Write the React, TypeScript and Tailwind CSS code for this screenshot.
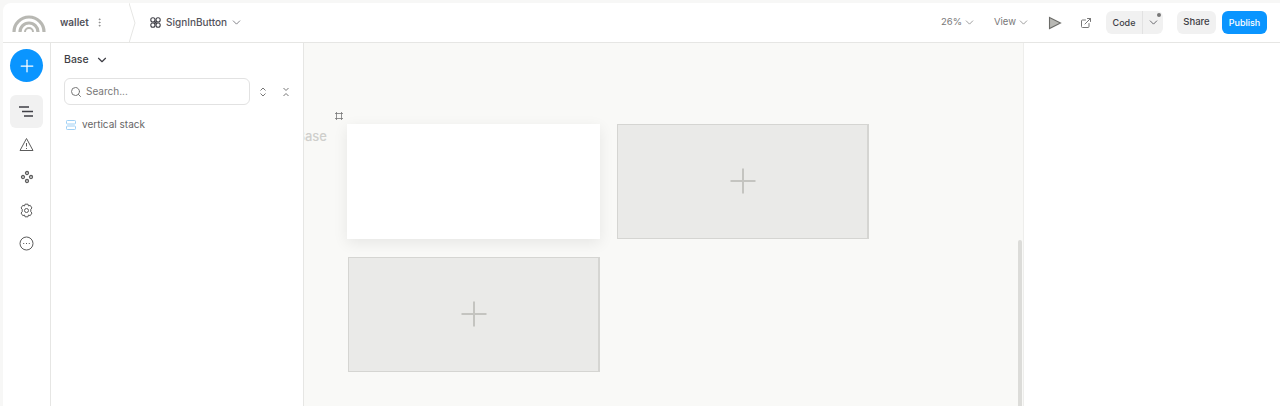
import { ChevronDown, EllipsisVertical, ExternalLink, Plus, Search } from 'lucide-react';

function ComponentIcon() {
  return (
    <svg width="11" height="11" viewBox="0 0 11 11" fill="none" stroke="#3f3f46" strokeWidth="1.1">
      <rect x="0.8" y="0.8" width="4.2" height="4.2" rx="2" />
      <rect x="6" y="0.8" width="4.2" height="4.2" rx="2" />
      <rect x="0.8" y="6" width="4.2" height="4.2" rx="2" />
      <rect x="6" y="6" width="4.2" height="4.2" rx="2" />
      <path d="M4 4L7 7M7 4L4 7" />
    </svg>
  );
}

function Logo() {
  return (
    <svg width="34" height="18" viewBox="0 0 34 18" fill="none" stroke="#b8b8b3" strokeWidth="3.2">
      <path d="M2 18 A15 15 0 0 1 32 18" />
      <path d="M8 18 A9 9 0 0 1 26 18" />
      <path d="M13 18 A4 4 0 0 1 21 18" strokeWidth="2" />
    </svg>
  );
}

function Placeholder({ className }: { className?: string }) {
  return (
    <div className={`flex items-center justify-center bg-[#eaeae8] border border-[#d5d5d2] border-r-[2px] ${className ?? ''}`}>
      <svg width="26" height="26" viewBox="0 0 26 26" stroke="#c4c4c0" strokeWidth="2" className="-mt-[1px]">
        <path d="M13 0.5V25.5M0.5 13H25.5" />
      </svg>
    </div>
  );
}

function RailIcon({ children }: { children: React.ReactNode }) {
  return <div className="w-8 h-[33px] flex items-center justify-center text-[#5c5c5c]">{children}</div>;
}

export default function App() {
  return (
    <div className="w-[1280px] h-[406px] overflow-hidden bg-[#f7f7f6] pt-[3px] pl-[3px] font-['Inter',sans-serif] text-[#3f3f46]">
      <div className="h-[403px] bg-white rounded-tl-lg flex flex-col">
        <header className="h-[40px] shrink-0 flex items-center border-b border-[#e6e6e4] pr-[13px]">
          <div className="w-[127px] h-full flex items-center pl-[9px] shrink-0">
            <Logo />
            <span className="ml-[14px] text-[10px] font-semibold text-[#52525b]">wallet</span>
            <EllipsisVertical size={11} className="ml-[5px] text-[#8a8a8a]" />
          </div>
          <svg width="8" height="40" viewBox="0 0 8 40" fill="none" stroke="#e6e6e4" className="shrink-0 -ml-[1px]">
            <path d="M0 0L6 20L0 40" />
          </svg>
          <div className="ml-[13px] flex items-center gap-[5px]">
            <ComponentIcon />
            <span className="text-[10px] font-medium text-[#52525b]">SignInButton</span>
            <ChevronDown size={13} strokeWidth={1.3} className="-ml-[2px] text-[#52525b]" />
          </div>
          <div className="ml-auto flex items-center">
            <div className="flex items-center gap-[1px] text-[9.5px] text-[#777]">
              26%
              <ChevronDown size={13} strokeWidth={1.3} />
            </div>
            <div className="ml-[18px] flex items-center gap-[1px] text-[9.5px] text-[#777]">
              View
              <ChevronDown size={13} strokeWidth={1.3} />
            </div>
            <svg width="14" height="14" viewBox="0 0 14 14" className="ml-[18px]" fill="#b8b8b4" stroke="#6b6b68" strokeWidth="1.1">
              <path d="M1.5 1.5L12.5 7L1.5 12.5Z" />
            </svg>
            <ExternalLink size={12} className="ml-[18px] text-[#777]" />
            <div className="relative ml-[14px] h-[23px] w-[57px] flex rounded-md bg-[#f1f1f1]">
              <div className="w-[37px] flex items-center justify-center text-[9px] font-medium text-[#3f3f46] border-r border-[#e2e2e2]">Code</div>
              <div className="flex-1 flex items-center justify-center">
                <ChevronDown size={13} strokeWidth={1.4} />
              </div>
              <div className="absolute right-[2px] top-[2px] w-[4px] h-[4px] rounded-full bg-[#777]" />
            </div>
            <div className="ml-[14px] h-[23px] w-[39px] rounded-md bg-[#f1f1f1] flex items-center justify-center text-[9.5px] font-medium">Share</div>
            <div className="ml-[6px] h-[23px] w-[45px] rounded-md bg-[#0a95ff] flex items-center justify-center text-[9px] font-medium text-white">Publish</div>
          </div>
        </header>

        <div className="flex-1 flex min-h-0">
          <aside className="w-[48px] shrink-0 border-r border-[#e6e6e4] flex flex-col items-center pt-[6px]">
            <div className="w-[33px] h-[33px] rounded-full bg-[#0a95ff] flex items-center justify-center text-white">
              <Plus size={20} strokeWidth={1.5} />
            </div>
            <div className="mt-[13px] w-[33px] h-[33px] rounded-md bg-[#f1f1f1] flex items-center justify-center">
              <svg width="15" height="11" viewBox="0 0 15 11" stroke="#3f3f46" strokeWidth="1.5">
                <path d="M0 1H10M3 5.5H14M5 10H14" />
              </svg>
            </div>
            <div className="flex flex-col items-center">
              <RailIcon>
                <svg width="15" height="15" viewBox="0 0 15 15" fill="none" stroke="currentColor">
                  <path d="M7.5 1.5L14 13.5H1Z" strokeLinejoin="round" />
                  <path d="M7.5 6V9.5M7.5 11V12" />
                </svg>
              </RailIcon>
              <RailIcon>
                <svg width="14" height="14" viewBox="0 0 14 14" fill="none" stroke="currentColor" strokeWidth="1.3" className="-mt-[1px]">
                  <circle cx="7" cy="3" r="1.5" />
                  <circle cx="3" cy="7" r="1.5" />
                  <circle cx="11" cy="7" r="1.5" />
                  <circle cx="7" cy="11" r="1.5" />
                </svg>
              </RailIcon>
              <RailIcon>
                <svg width="15" height="15" viewBox="0 0 15 15" fill="none" stroke="currentColor">
                  <path d="M6 1.2H9L9.5 3L11.2 2.3L13 5L11.8 6.2V8.8L13 10L11.2 12.7L9.5 12L9 13.8H6L5.5 12L3.8 12.7L2 10L3.2 8.8V6.2L2 5L3.8 2.3L5.5 3Z" strokeLinejoin="round" />
                  <circle cx="7.5" cy="7.5" r="2" />
                </svg>
              </RailIcon>
              <RailIcon>
                <svg width="15" height="15" viewBox="0 0 15 15" fill="none" stroke="currentColor">
                  <circle cx="7.5" cy="7.5" r="6.5" />
                  <path d="M4.2 7.5H5.2M7 7.5H8M9.8 7.5H10.8" />
                </svg>
              </RailIcon>
            </div>
          </aside>

          <section className="w-[253px] shrink-0 border-r border-[#e6e6e4] pl-[13px] pt-[10px]">
            <div className="flex items-center gap-[6px] text-[10.5px] font-medium h-[14px]">
              Base
              <ChevronDown size={14} />
            </div>
            <div className="mt-[11px] flex items-center">
              <div className="w-[186px] h-[27px] rounded-md border border-[#e2e2e2] flex items-center pl-[5px] gap-[4px] text-[10px] text-[#777]">
                <Search size={12} />
                Search...
              </div>
              <svg width="8" height="10" viewBox="0 0 8 10" fill="none" stroke="#777" className="ml-[9px]">
                <path d="M1.5 3.5L4 1L6.5 3.5M1.5 6.5L4 9L6.5 6.5" />
              </svg>
              <svg width="8" height="10" viewBox="0 0 8 10" fill="none" stroke="#777" className="ml-[15px]">
                <path d="M1.5 1L4 3.5L6.5 1M1.5 9L4 6.5L6.5 9" />
              </svg>
            </div>
            <div className="mt-[12px] ml-[2px] flex items-center gap-[6px] text-[10px] text-[#666]">
              <svg width="10" height="10" viewBox="0 0 10 10" fill="none" stroke="#9fd0f5">
                <rect x="0.5" y="0.5" width="9" height="3.5" rx="0.8" />
                <rect x="0.5" y="6" width="9" height="3.5" rx="0.8" />
              </svg>
              vertical stack
            </div>
          </section>

          <main className="relative w-[720px] shrink-0 overflow-hidden bg-[#f9f9f7] pl-[43px] pt-[81px] border-r border-[#eeeeec]">
            <div className="absolute left-[31px] top-[69px]">
              <svg width="8" height="8" viewBox="0 0 8 8" fill="none" stroke="#777" strokeWidth="0.8">
                <path d="M1.5 0V8M6.5 0V8M0 1.5H8M0 6.5H8" />
              </svg>
            </div>
            <div className="absolute right-[696px] top-[84px] text-[13px] font-medium text-[#cfcfcc] whitespace-nowrap">Base</div>
            <div className="grid grid-cols-[253px_252px] grid-rows-[115px_115px] gap-x-[17px] gap-y-[18px]">
              <div className="bg-white shadow-[0_4px_14px_rgba(0,0,0,0.08)]" />
              <Placeholder />
              <Placeholder className="ml-[1px] -mr-[0px]" />
            </div>
            <div className="absolute right-[1px] top-[197px] bottom-0 w-[4px] bg-[#dcdcd9] rounded-t" />
          </main>

          <div className="flex-1 bg-white" />
        </div>
      </div>
    </div>
  );
}
